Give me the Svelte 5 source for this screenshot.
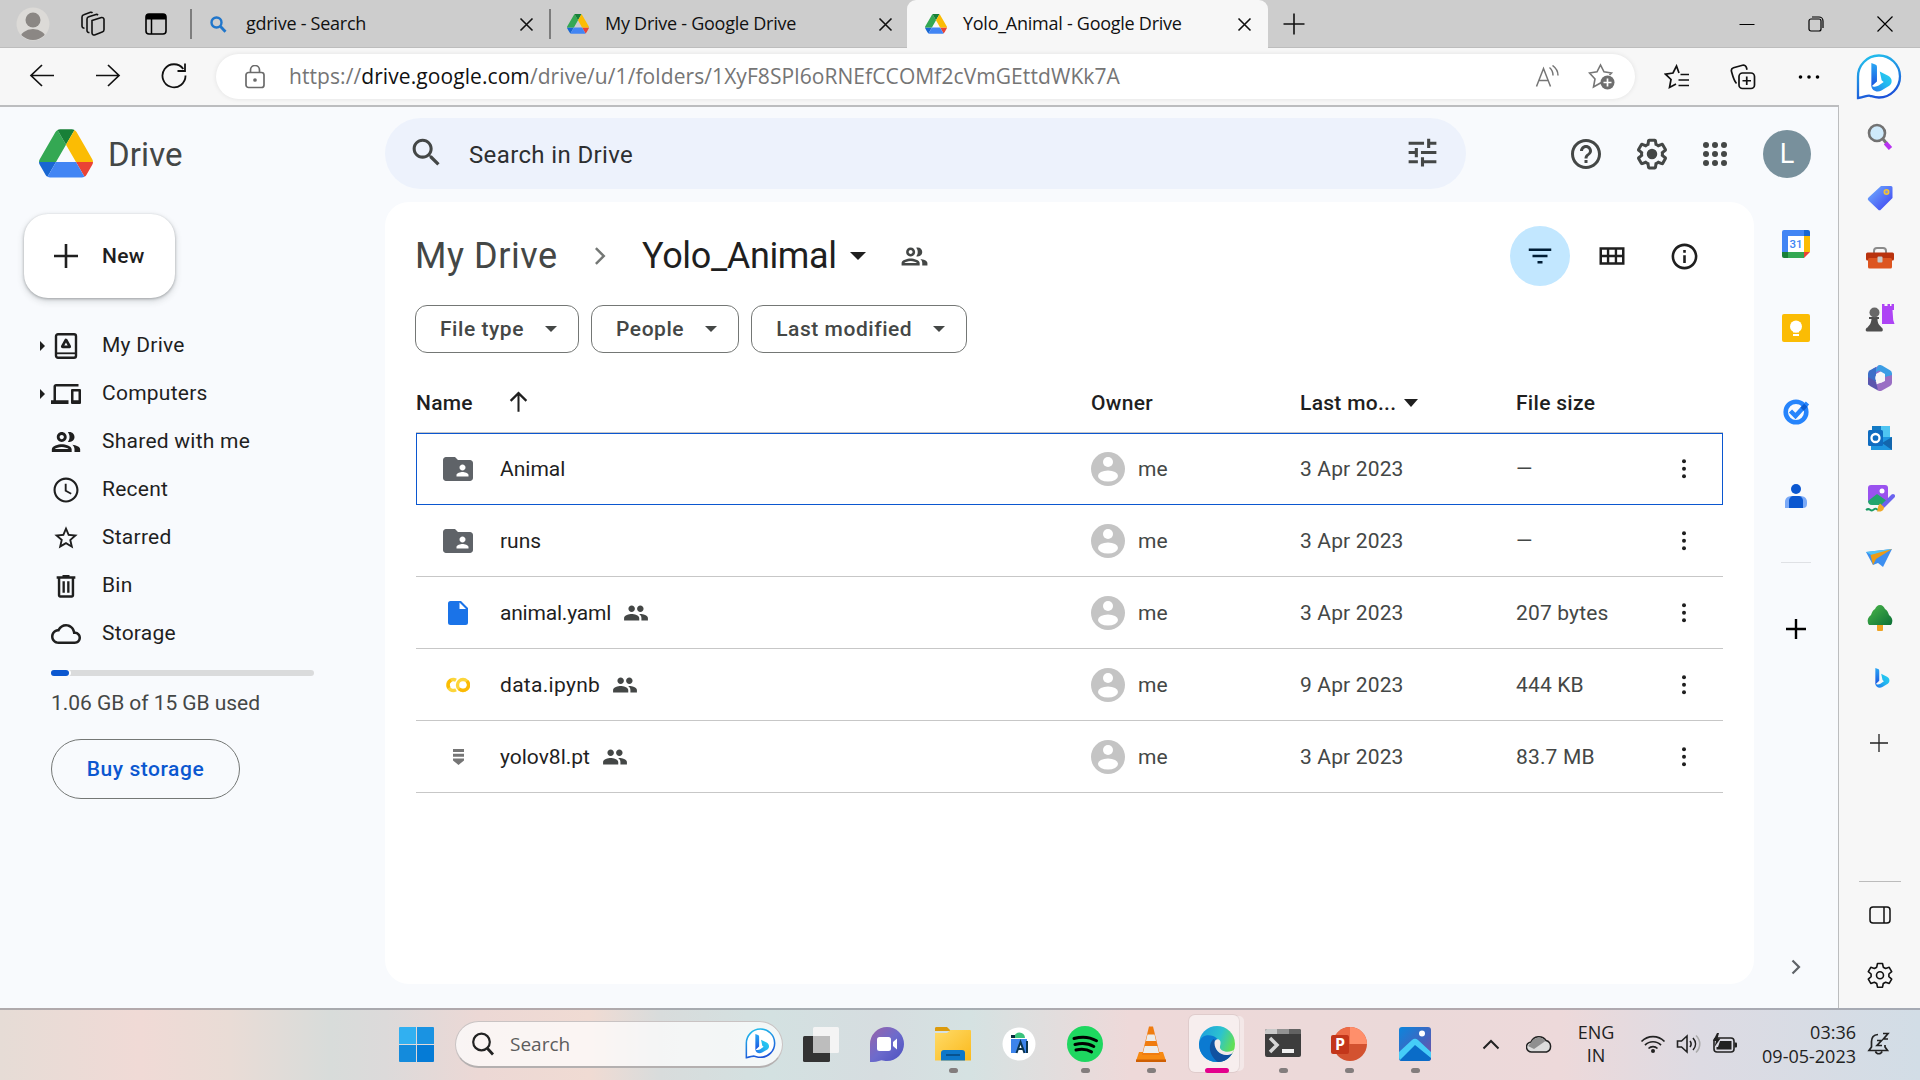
<script>
  const paths = {
    search: 'M15.5 14h-.79l-.28-.27C15.41 12.59 16 11.11 16 9.5 16 5.91 13.09 3 9.5 3S3 5.91 3 9.5 5.91 16 9.5 16c1.61 0 3.09-.59 4.23-1.57l.27.28v.79l5 4.99L20.49 19l-4.99-5zm-6 0C7.01 14 5 11.99 5 9.5S7.01 5 9.5 5 14 7.01 14 9.5 11.99 14 9.5 14z',
    tune: 'M3 17v2h6v-2H3zM3 5v2h10V5H3zm10 16v-2h8v-2h-8v-2h-2v6h2zM7 9v2H3v2h4v2h2V9H7zm14 4v-2H11v2h10zm-6-4h2V7h4V5h-4V3h-2v6z',
    help: 'M11 18h2v-2h-2v2zm1-16C6.48 2 2 6.48 2 12s4.48 10 10 10 10-4.48 10-10S17.52 2 12 2zm0 18c-4.41 0-8-3.59-8-8s3.59-8 8-8 8 3.59 8 8-3.59 8-8 8zm0-14c-2.21 0-4 1.79-4 4h2c0-1.1.9-2 2-2s2 .9 2 2c0 2-3 1.75-3 5h2c0-2.25 3-2.5 3-5 0-2.21-1.79-4-4-4z',
    gear: 'M13.85 22.25h-3.7c-.74 0-1.36-.54-1.45-1.27l-.27-1.89c-.27-.14-.53-.29-.79-.46l-1.8.72c-.7.26-1.47-.03-1.81-.65L2.2 15.53c-.35-.66-.2-1.44.36-1.88l1.53-1.19c-.01-.15-.02-.3-.02-.46 0-.15.01-.31.02-.46l-1.52-1.19c-.59-.45-.74-1.26-.37-1.88l1.85-3.19c.34-.62 1.11-.9 1.79-.63l1.81.73c.26-.17.52-.32.78-.46l.27-1.91c.09-.7.71-1.25 1.44-1.25h3.7c.74 0 1.36.54 1.45 1.27l.27 1.89c.27.14.53.29.79.46l1.8-.72c.71-.26 1.48.03 1.82.65l1.84 3.18c.36.66.2 1.44-.36 1.88l-1.52 1.19c.01.15.02.3.02.46s-.01.31-.02.46l1.52 1.19c.56.45.72 1.23.37 1.86l-1.86 3.22c-.34.62-1.11.9-1.8.63l-1.8-.72c-.26.17-.52.32-.78.46l-.27 1.91c-.1.68-.72 1.22-1.46 1.22zm-3.23-2h2.76l.37-2.55.53-.22c.44-.18.88-.44 1.34-.78l.45-.34 2.38.96 1.38-2.4-2.03-1.58.07-.56c.03-.26.06-.51.06-.78s-.03-.53-.06-.78l-.07-.56 2.03-1.58-1.39-2.4-2.39.96-.45-.35c-.42-.32-.87-.58-1.33-.77l-.52-.22-.37-2.55h-2.76l-.37 2.55-.53.21c-.44.19-.88.44-1.34.79l-.45.33-2.38-.95-1.39 2.39 2.03 1.58-.07.56a7 7 0 0 0-.06.79c0 .26.02.53.06.78l.07.56-2.03 1.58 1.38 2.4 2.39-.96.45.35c.43.33.86.58 1.33.77l.53.22.38 2.55zM12 8.5a3.5 3.5 0 1 0 0 7 3.5 3.5 0 0 0 0-7z',
    filter: 'M10 18h4v-2h-4v2zM3 6v2h18V6H3zm3 7h12v-2H6v2z',
    info: 'M11 7h2v2h-2zm0 4h2v6h-2zm1-9C6.48 2 2 6.48 2 12s4.48 10 10 10 10-4.48 10-10S17.52 2 12 2zm0 18c-4.41 0-8-3.59-8-8s3.59-8 8-8 8 3.59 8 8-3.59 8-8 8z',
    people: 'M9 13.5c-2.5 0-7 1.2-7 3.6V19h14v-1.9c0-2.4-4.5-3.6-7-3.6zM4.1 17c.6-.7 2.9-1.5 4.9-1.5s4.3.8 4.9 1.5H4.1zM9 12c1.93 0 3.5-1.57 3.5-3.5S10.93 5 9 5 5.5 6.57 5.5 8.5 7.07 12 9 12zm0-5c.83 0 1.5.67 1.5 1.5S9.83 10 9 10s-1.5-.67-1.5-1.5S8.17 7 9 7zm7.5 6.900c.9.8 1.500 1.900 1.500 3.200V19h4v-1.900c0-1.900-3-2.900-5.500-3.200zM14.500 12c1.930 0 3.500-1.570 3.500-3.500S16.430 5 14.500 5c-.5 0-.9.1-1.200.2.8.9 1.200 2 1.200 3.300s-.4 2.400-1.200 3.300c.3.1.7.2 1.200.2z',
    group: 'M16 11c1.66 0 2.99-1.34 2.99-3S17.66 5 16 5c-1.66 0-3 1.34-3 3s1.34 3 3 3zm-8 0c1.66 0 2.99-1.34 2.99-3S9.66 5 8 5C6.34 5 5 6.34 5 8s1.34 3 3 3zm0 2c-2.33 0-7 1.17-7 3.5V19h14v-2.5c0-2.33-4.67-3.5-7-3.5zm8 0c-.29 0-.62.02-.97.05 1.16.84 1.97 1.97 1.97 3.45V19h6v-2.5c0-2.33-4.67-3.5-7-3.5z',
    devices: 'M4 6h18V4H4c-1.1 0-2 .9-2 2v11H0v3h14v-3H4V6zm19 2h-6c-.55 0-1 .45-1 1v10c0 .55.45 1 1 1h6c.55 0 1-.45 1-1V9c0-.55-.45-1-1-1zm-1 9h-4v-7h4v7z',
    clock: 'M11.99 2C6.47 2 2 6.48 2 12s4.47 10 9.99 10C17.52 22 22 17.52 22 12S17.52 2 11.99 2zM12 20.3c-4.6 0-8.3-3.7-8.3-8.3s3.7-8.3 8.3-8.3 8.3 3.7 8.3 8.3-3.7 8.3-8.3 8.3zm.5-13.300H11v6l4.800 2.600.7-1.200-4-2.200z',
    star: 'M22 9.24l-7.19-.62L12 2 9.19 8.63 2 9.24l5.46 4.73L5.82 21 12 17.27 18.18 21l-1.63-7.03L22 9.24zM12 15.4l-3.76 2.27 1-4.28-3.32-2.88 4.38-.38L12 6.1l1.71 4.04 4.38.38-3.32 2.88 1 4.28L12 15.4z',
    cloud: 'M19.35 10.04C18.67 6.59 15.64 4 12 4 9.11 4 6.6 5.64 5.35 8.04 2.34 8.36 0 10.91 0 14c0 3.31 2.69 6 6 6h13c2.76 0 5-2.24 5-5 0-2.64-2.05-4.78-4.65-4.96zM19 18H6c-2.21 0-4-1.79-4-4 0-2.05 1.53-3.76 3.56-3.97l1.07-.11.5-.95C8.08 7.14 9.94 6 12 6c2.62 0 4.88 1.86 5.39 4.43l.3 1.5 1.53.11c1.56.1 2.78 1.41 2.78 2.96 0 1.65-1.35 3-3 3z',
    folder: 'M20 6h-8l-2-2H4c-1.1 0-1.99.9-1.99 2L2 18c0 1.1.9 2 2 2h16c1.1 0 2-.9 2-2V8c0-1.1-.9-2-2-2zm-5 3c1.1 0 2 .9 2 2s-.9 2-2 2-2-.9-2-2 .9-2 2-2zm4 8h-8v-1c0-1.33 2.67-2 4-2s4 .67 4 2v1z',
    grid: 'M2 5v14h20V5H2zm12.2 2v4H9.8V7h4.4zM4 7h3.900v4H4V7zm0 10v-4h3.900v4H4zm5.800 0v-4h4.400v4H9.800zM20 17h-3.900v-4H20v4zm-3.900-6V7H20v4h-3.900z',
    bin: 'M9 2.500v1.200H4v2.100h1V20c0 1.100.9 2 2 2h10c1.100 0 2-.9 2-2V5.800h1V3.700h-5V2.500H9zM7.100 5.800h9.800v14.100H7.100V5.800zM9 8v9.700h2V8H9zm4 0v9.700h2V8h-2z',
    up: 'M11.100 21V6.800L5.700 12.200 4.300 10.700 12 3l7.700 7.700-1.400 1.500-5.400-5.400V21z',
    chevron: 'M8.600 5 7.200 6.400 12.800 12l-5.600 5.600L8.600 19l7-7z',
  };

  const nav = [
    { label: 'My Drive', icon: 'mydrive', size: 30, tree: true },
    { label: 'Computers', icon: 'devices', size: 30, tree: true },
    { label: 'Shared with me', icon: 'people', size: 34 },
    { label: 'Recent', icon: 'clock', size: 30 },
    { label: 'Starred', icon: 'star', size: 28 },
    { label: 'Bin', icon: 'bin', size: 28 },
    { label: 'Storage', icon: 'cloud', size: 30 },
  ];
  const tabs = [
    { title: 'gdrive - Search', kind: 'search' },
    { title: 'My Drive - Google Drive', kind: 'drive' },
    { title: 'Yolo_Animal - Google Drive', kind: 'drive', active: true },
  ];
  const chips = ['File type', 'People', 'Last modified'];
  const files = [
    { name: 'Animal', kind: 'folder', date: '3 Apr 2023', size: '—', focus: true },
    { name: 'runs', kind: 'folder', date: '3 Apr 2023', size: '—' },
    { name: 'animal.yaml', kind: 'doc', date: '3 Apr 2023', size: '207 bytes', shared: true },
    { name: 'data.ipynb', kind: 'colab', date: '9 Apr 2023', size: '444 KB', shared: true },
    { name: 'yolov8l.pt', kind: 'binary', date: '3 Apr 2023', size: '83.7 MB', shared: true },
  ];
  const addons = ['calendar', 'keep', 'tasks', 'contacts'];
  const tools = ['lens', 'tag', 'toolbox', 'chess', 'm365', 'outlook', 'image', 'plane', 'tree', 'bing'];
  const apps = [
    { id: 'taskview' }, { id: 'chat' }, { id: 'explorer', open: true }, { id: 'studio' },
    { id: 'spotify', open: true }, { id: 'vlc', open: true }, { id: 'edge', open: true, active: true },
    { id: 'terminal', open: true }, { id: 'powerpoint', open: true }, { id: 'photos', open: true },
  ];
</script>

{#snippet icon(name, size)}
  <svg width={size} height={size} viewBox="0 0 24 24" fill="currentColor"><path d={paths[name]} /></svg>
{/snippet}

{#snippet logo(w)}
  <svg width={w} height={w * 0.9} viewBox="0 0 87.3 78">
    <path fill="#1967d2" d="m6.6 66.850 3.850 6.650c.8 1.400 1.950 2.500 3.300 3.300l13.750-23.800h-27.500c0 1.550.4 3.100 1.200 4.500z" />
    <path fill="#34a853" d="m43.650 25-13.750-23.800c-1.350.8-2.500 1.900-3.300 3.300l-25.400 44a9.060 9.060 0 0 0-1.200 4.500h27.500z" />
    <path fill="#ea4335" d="m73.550 76.800c1.350-.8 2.500-1.900 3.300-3.300l1.600-2.750 7.650-13.250c.8-1.400 1.200-2.950 1.200-4.500h-27.500z" />
    <path fill="#188038" d="m43.650 25 13.750-23.800c-1.350-.8-2.900-1.200-4.500-1.200h-18.500c-1.600 0-3.150.450-4.500 1.200z" />
    <path fill="#4285f4" d="m59.800 53h-32.300l-13.750 23.800c1.350.8 2.900 1.200 4.500 1.200h50.800c1.600 0 3.150-.450 4.500-1.200z" />
    <path fill="#fbbc04" d="m73.400 26.500-12.700-22c-.8-1.400-1.950-2.500-3.300-3.300l-13.750 23.800 16.150 28h27.450c0-1.550-.4-3.100-1.200-4.500z" />
  </svg>
{/snippet}

{#snippet bingMark()}
  <path fill="url(#bingA)" d="M3 0 6.500 1.300A2.200 2.200 0 0 1 8 3.400v13.100L3 21z" />
  <path fill="url(#bingB)" d="M10.500 7.500 18 11.300c4 2.200 4 6.800 1 9l-7 4.200c-4 2.200-9 0-9-4.500 2 1.800 4.500 1.300 6.500.1l4.500-3.200-1.800-1.500z" />
{/snippet}

{#snippet bingBubble(s)}
  <svg width={s} height={s} viewBox="0 0 46 46">
    <path d="M2 44V23a21 21 0 1 1 21 20.500c-4 0-7-1.200-9-1.700-3-.6-5 1.200-12 2.200z" fill="#fff" stroke="url(#bingC)" stroke-width="2.300" />
    <g transform="translate(12 9) scale(1.120)">{@render bingMark()}</g>
  </svg>
{/snippet}

{#snippet avatar()}
  <svg width="34" height="34" viewBox="0 0 34 34"><circle cx="17" cy="17" r="17" fill="#c4c4c4" /><circle cx="17" cy="10" r="5" fill="#fff" /><ellipse cx="17" cy="24" rx="10" ry="5.500" fill="#fff" /></svg>
{/snippet}

{#snippet fileIcon(kind)}
  {#if kind === 'folder'}
    {@render icon('folder', 36)}
  {:else if kind === 'doc'}
    <svg width="20" height="24" viewBox="0 0 20 24"><path d="M2.500 0H13l7 7v14.500a2.500 2.500 0 0 1-2.500 2.500h-15A2.500 2.500 0 0 1 0 21.500v-19A2.500 2.500 0 0 1 2.500 0z" fill="#1a73e8" /><path d="M11.500 1.500V8H18z" fill="#fff" /></svg>
  {:else if kind === 'colab'}
    <svg width="24" height="16" viewBox="0 0 24 16" fill="none" stroke-width="3.400"><path d="M10 3.200A5.500 5.500 0 1 0 10 12.800" stroke="#fcd53a" /><path d="M3 10.800A5.500 5.500 0 0 1 5 3.300" stroke="#fbbc04" /><circle cx="17" cy="8" r="5.500" stroke="#fcd53a" /><path d="M13.100 11.900A5.500 5.500 0 0 0 20.900 4.100" stroke="#fbb904" /></svg>
  {:else}
    <svg width="11" height="16" viewBox="0 0 11 16" fill="#757575"><path d="M0 0h11v3H0zM0 4.700h11v3H0zM0 9.400h11v2L5.500 16 0 11.400z" /></svg>
  {/if}
{/snippet}

{#snippet addon(id)}
  {#if id === 'calendar'}
    <svg width="28" height="28" viewBox="0 0 28 28"><path d="M2 0h21v6H6v16H0V2a2 2 0 0 1 2-2z" fill="#4285f4" /><path d="M22 0h4a2 2 0 0 1 2 2v4h-6z" fill="#1967d2" /><path d="M22 6h6v16h-6z" fill="#fbbc04" /><path d="M6 22h16v6H6z" fill="#34a853" /><path d="M0 22h6v6H2a2 2 0 0 1-2-2z" fill="#188038" /><path d="M22 22h6l-6 6z" fill="#ea4335" /><path d="M6 6h16v16H6z" fill="#fff" /><text x="14" y="18.200" text-anchor="middle" class="cal">31</text></svg>
  {:else if id === 'keep'}
    <svg width="28" height="28" viewBox="0 0 28 28"><rect width="28" height="28" rx="2" fill="#fbbc04" /><circle cx="14" cy="12.500" r="6" fill="#fff" /><path d="M11 16h6v2.500h-6zM11 20h6v2h-6z" fill="#fff" /></svg>
  {:else if id === 'tasks'}
    <svg width="28" height="28" viewBox="0 0 28 28"><circle cx="14" cy="14" r="10.300" fill="none" stroke="#2684fc" stroke-width="4.600" /><path d="M8.500 13l5 5L25.500 5" fill="none" stroke="#2684fc" stroke-width="4.500" /><path d="M18.500 9.500l3.600-3.800 3.400 3-3.800 4z" fill="#0b5bd0" /></svg>
  {:else}
    <svg width="24" height="28" viewBox="0 0 24 28"><path d="M1 26v-6c0-4 3-6 7-6h8c4 0 7 2 7 6v2c0 3-2 4-4 4z" fill="#7baaf7" /><path d="M5 26v-7c0-3 2-5 5-5h4c3 0 5 2 5 5v7z" fill="#0b57d0" /><circle cx="12" cy="7" r="5" fill="#0b57d0" /></svg>
  {/if}
{/snippet}

{#snippet tool(id)}
  <svg width="30" height="30" viewBox="0 0 30 30">
    {#if id === 'lens'}
      <path d="M18 16l4 5" stroke="#777" stroke-width="3" /><path d="M20.500 20l5 5.500" stroke="#b833f0" stroke-width="4.500" /><circle cx="12" cy="10" r="8" fill="#cfeafb" stroke="#727272" stroke-width="2.600" />
    {:else if id === 'tag'}
      <path d="M16 3h10a1.500 1.500 0 0 1 1.500 1.500V15L16 26.500a2 2 0 0 1-3 0L3.500 17.500a2 2 0 0 1 0-3z" fill="url(#tagG)" /><circle cx="21.500" cy="9" r="2.200" fill="#8a92d8" stroke="#f4c430" stroke-width="1.600" />
    {:else if id === 'toolbox'}
      <g transform="translate(0 2)"><path d="M9 8V6a3 3 0 0 1 3-3h6a3 3 0 0 1 3 3v2" fill="none" stroke="#8b8b8b" stroke-width="2" /><rect x="1" y="7.500" width="28" height="8" rx="1.500" fill="#b9330e" /><rect x="3" y="13" width="24" height="10.500" rx="1.500" fill="#dd5520" /><rect x="12.500" y="11.500" width="5" height="6" rx="1" fill="#c8c8c8" /></g>
    {:else if id === 'chess'}
      <path d="M17 1h2.500v2h3V1h2.500v2h1.500V1H29v6h-1.500l.7 10 1.300 4H17z" fill="#ae44f5" /><path d="M6 14h8v2h-1.500c0 5 2 6 4 8.500 1.500.5 2 4 0 4H2c-2-.2-1.500-3.500.5-4 2-2.500 3.500-3.500 4-8.500H4v-2z" fill="#4f4f4f" /><circle cx="9.500" cy="9.500" r="5" fill="#686868" />
    {:else if id === 'm365'}
      <path d="M15 2l-6 3.300a5 5 0 0 0-3 4.500v10.400l5-2.700V11l9-5z" fill="#8d6fd0" /><path d="M13 2.600a4 4 0 0 1 4 0l8 4.600A4 4 0 0 1 27 10.500v8L20 15v-4l-6-3.500-5 3z" fill="#3c9ee5" /><path d="M3 10.500a4 4 0 0 1 2-3.300L11 4v14l-8 4z" fill="#3c6fc8" /><path d="M27 12v8a4 4 0 0 1-2 3l-8 4.500a4 4 0 0 1-4 0l-3-5.500 10-4V14z" fill="#9a6fc4" /><path d="M3 14v6a4 4 0 0 0 2 3l8 4.500-2-9z" fill="#5b55ad" /><circle cx="15" cy="15" r="4.800" fill="#f7f7f7" />
    {:else if id === 'outlook'}
      <rect x="7" y="3" width="18" height="14" fill="#4fc5f2" /><path d="M7 3h9v7H7z" fill="#147ac4" /><path d="M6 14h21v13H6z" fill="#1e96e0" /><path d="M27 14v13L17 20z" fill="#1366ad" /><rect x="3" y="7" width="15" height="16" rx="1.500" fill="#0f6cc0" /><circle cx="10.500" cy="15" r="4" fill="none" stroke="#fff" stroke-width="2.300" />
    {:else if id === 'image'}
      <g transform="translate(0 1)"><rect x="3" y="1" width="20" height="18" rx="3" fill="#9a52ef" /><circle cx="17" cy="7" r="2.500" fill="#fff" /><path d="M3 17l9-7 10 7-4 4H7c-3 0-4-2-4-4z" fill="#22a56d" /><path d="M1 26c4-3 4 2 7 0s2-2 5 0" fill="none" stroke="#1a9a63" stroke-width="2" /><path d="M28 12L18 22" stroke="#6b63ef" stroke-width="4" stroke-linecap="round" /><path d="M15 19.500l4 3.500c0 4-3 5-7 4.500 1-2 .5-6 3-8z" fill="#f0aa28" /></g>
    {:else if id === 'plane'}
      <path d="M1 9l26-3-9 18-5-4-5 2z" fill="#3d8ff0" /><path d="M1 9l26-3L10 14z" fill="#53c4f5" /><path d="M27 6L5.500 12 8 22 11 16z" fill="#eb9c17" />
    {:else if id === 'tree'}
      <rect x="12" y="20" width="6" height="8" rx="1" fill="#efa424" /><path d="M15 2c2.500 0 4 2 5 4 2 1 3 3 4 6 3 2 4 5 3 8-.4 1.500-1 2-2 2H5c-1 0-1.600-.5-2-2-1-3 0-6 3-8 1-3 2-5 4-6 1-2 2.500-4 5-4z" fill="url(#treeG)" />
    {:else}
      <g transform="translate(8 5) scale(.78)">{@render bingMark()}</g>
    {/if}
  </svg>
{/snippet}

{#snippet app(id)}
  <svg width="38" height="38" viewBox="0 0 38 38">
    {#if id === 'taskview'}
      <rect x="1" y="11" width="27" height="26" rx="1.500" fill="#333" /><rect x="11" y="2" width="26" height="26" rx="1.500" fill="#f4f4f4" /><path d="M11 11h17v17H11z" fill="#bdbdbd" />
    {:else if id === 'chat'}
      <path d="M2 37V19A17 17 0 1 1 19 36c-2 0-4-.3-5.500-.8C10 36.500 6 37 2 37z" fill="url(#chatG)" /><rect x="9" y="12" width="14" height="14" rx="2.500" fill="#fff" /><path d="M25 17l4-3.500v11L25 21z" fill="#fff" />
    {:else if id === 'explorer'}
      <path d="M1 4a1.500 1.500 0 0 1 1.500-2H13l4 4H1z" fill="#dc9b0d" /><path d="M1 8h12l3.500-3H36a1 1 0 0 1 1 1v29.500H1z" fill="url(#foldG)" /><path d="M7 35.500V28a3 3 0 0 1 3-3h18a3 3 0 0 1 3 3v7.500z" fill="#0d77c9" /><path d="M12 30h14" stroke="#07528f" stroke-width="2" />
    {:else if id === 'studio'}
      <circle cx="19" cy="19" r="16.500" fill="#fff" /><path d="M11 14h16v14h-3l-4-11-4 11h-5z" fill="#3d84ec" /><path d="M14 13a5.500 5.500 0 0 1 11 0z" fill="#3bc37d" /><path d="M11 10h4v3h-4z" fill="#082d40" /><path d="M16.500 28l4-11 4 11M18.500 24h4M27 16v12" fill="none" stroke="#0b3550" stroke-width="2" />
    {:else if id === 'spotify'}
      <circle cx="19" cy="19" r="18" fill="#1ed760" /><path d="M8 13.500c8-2.300 16-1.500 22.500 2.300M9 19.500c7-1.900 13.500-1.200 18.800 2M10 25c6-1.400 11-.8 15.500 1.900" fill="none" stroke="#000" stroke-width="3" stroke-linecap="round" />
    {:else if id === 'vlc'}
      <path d="M7 27h24l3 9H4z" fill="#f78a12" /><path d="M17 1.500h4L28 30H10z" fill="#f07c10" /><path d="M15.500 9.500h7l1.500 6.500H14zM12.700 21h12.600l1.700 7H11z" fill="#ececec" /><path d="M4 34.500h30V37H4z" fill="#cf5f04" />
    {:else if id === 'edge'}
      <circle cx="19" cy="19" r="18" fill="url(#edgeA)" /><path d="M1 19C2 10 10 9 15 11c5 2 6 5 4.500 7-3 4-1 13 6 13 4 0 8-2 9-3-5 8-11 9-15.500 9C8 37 1 29 1 19z" fill="#0b7ad1" /><path d="M16 14c-6 4-6 16 4 23 7 0 12-4 14.500-9.500-8 5-18 0-16.500-8z" fill="#1151a0" /><path d="M16.500 18c0-5 7-5 6 1-.7 3-1 4 1 6 4 3 11 2 13-1-1 2-1.500 3-2.500 4.500C26 33 16.500 27 16.500 18z" fill="#f5e9ea" />
    {:else if id === 'terminal'}
      <rect x="1" y="4" width="36" height="28" rx="2" fill="#3d3d3d" /><path d="M1 6a2 2 0 0 1 2-2h10v5H1z" fill="#c9c9c9" /><path d="M13 4h12v5H13z" fill="#929292" /><path d="M25 4h10a2 2 0 0 1 2 2v3H25z" fill="#626262" /><path d="M6 13l7 7-7 7" fill="none" stroke="#d6d6d6" stroke-width="3.500" /><rect x="18" y="24" width="12" height="4" fill="#f0f0f0" />
    {:else if id === 'powerpoint'}
      <circle cx="20" cy="19" r="17" fill="#d35230" /><path d="M20 2a17 17 0 0 1 17 17H20z" fill="#ff8f6b" /><path d="M20 2v17H3A17 17 0 0 1 20 2z" fill="#ed6c47" /><rect x="1" y="10" width="18" height="19" rx="2" fill="#c3361a" /><text x="10" y="25" text-anchor="middle" class="ppt">P</text>
    {:else}
      <rect x="3" y="2" width="32" height="34" rx="3" fill="url(#photoG)" /><path d="M4 34l15-16 16 15c0 2-1 3-3 3H6c-2 0-3-1-2-2z" fill="#0a6cc8" /><path d="M3 27l13-12c2-1.800 4-1.800 6 0l13 12v6L19 20 4 35c-1-1-1-2-1-3z" fill="#45cdf8" /><circle cx="26" cy="8.500" r="3" fill="#fff" />
    {/if}
  </svg>
{/snippet}

<svg class="defs" width="0" height="0">
  <defs>
    <linearGradient id="bingA" x1="0" y1="0" x2="0" y2="1"><stop offset="0" stop-color="#2aa8f4" /><stop offset="1" stop-color="#1a53e0" /></linearGradient>
    <linearGradient id="bingB" x1="1" y1="0" x2="0" y2="1"><stop offset="0" stop-color="#28d5f0" /><stop offset=".5" stop-color="#22b5f0" /><stop offset="1" stop-color="#2472ea" /></linearGradient>
    <linearGradient id="bingC" x1="0.300" y1="0" x2=".6" y2="1"><stop offset="0" stop-color="#22bdec" /><stop offset="1" stop-color="#1b4fd8" /></linearGradient>
    <linearGradient id="tagG" x1="0" y1="0" x2="1" y2="1"><stop offset="0" stop-color="#72b4ff" /><stop offset="1" stop-color="#3d3df0" /></linearGradient>
    <linearGradient id="treeG" x1="0" y1="0" x2="1" y2="1"><stop offset="0" stop-color="#4cb84a" /><stop offset="1" stop-color="#0c7036" /></linearGradient>
    <linearGradient id="chatG" x1="0" y1="0" x2="1" y2="1"><stop offset="0" stop-color="#9a63a8" /><stop offset=".5" stop-color="#6d6bcc" /><stop offset="1" stop-color="#4b50c0" /></linearGradient>
    <linearGradient id="foldG" x1="0" y1="0" x2="1" y2="1"><stop offset="0" stop-color="#ffdb68" /><stop offset="1" stop-color="#fbb91c" /></linearGradient>
    <linearGradient id="edgeA" x1="0" y1="0" x2="1" y2=".4"><stop offset="0" stop-color="#1c9be0" /><stop offset=".6" stop-color="#2cc3cf" /><stop offset="1" stop-color="#62df55" /></linearGradient>
    <linearGradient id="photoG" x1="0" y1="0" x2="1" y2="1"><stop offset="0" stop-color="#0b86dd" /><stop offset=".6" stop-color="#4563bd" /><stop offset="1" stop-color="#7c4fa3" /></linearGradient>
  </defs>
</svg>

<div class="screen">
  <header class="tabbar">
    <svg class="profile" width="34" height="34" viewBox="0 0 34 34"><clipPath id="pc"><circle cx="17" cy="17" r="16" /></clipPath><circle cx="17" cy="17" r="16.500" fill="#dcdad7" /><g clip-path="url(#pc)" fill="#8b8784"><circle cx="17" cy="13" r="7.500" /><ellipse cx="17" cy="32" rx="13" ry="10" /></g></svg>
    <svg class="spaces" width="26" height="26" viewBox="0 0 26 26" fill="none" stroke="#111" stroke-width="1.600"><path d="M12 9.500l9.500-3a2 2 0 0 1 2.500 1.800v10.500a2.500 2.500 0 0 1-1.800 2.300l-7.600 2.800a2 2 0 0 1-2.600-1.900z" /><path d="M9.500 21.500a2 2 0 0 1-2.500-2V8a2.500 2.500 0 0 1 1.800-2.300L16 3.500a2 2 0 0 1 2 .6M4.500 17A2 2 0 0 1 2 15V6a2.500 2.500 0 0 1 1.800-2.300L10.500 1.300a2 2 0 0 1 2 .6" /></svg>
    <svg class="actions" width="22" height="22" viewBox="0 0 22 22"><rect x="1" y="1" width="20" height="20" rx="3" fill="none" stroke="#000" stroke-width="1.600" /><path d="M1 4a3 3 0 0 1 3-3h14a3 3 0 0 1 3 3v2.500H1z" /><path d="M6.500 6v15" stroke="#000" stroke-width="1.500" /></svg>
    {#each tabs as t}
      <div class="tab" class:active={t.active}>
        <span class="favicon">
          {#if t.kind === 'drive'}
            {@render logo(22)}
          {:else}
            <svg width="17" height="17" viewBox="0 0 17 17" fill="none" stroke="#2076cb"><circle cx="6.500" cy="6.500" r="5" stroke-width="2.400" /><path d="M10.500 10.500l5 5.200" stroke-width="2.800" /></svg>
          {/if}
        </span>
        <span class="title">{t.title}</span>
        <svg class="close" width="15" height="15" viewBox="0 0 15 15" stroke="#111" stroke-width="1.600"><path d="M1.500 1.500l12 12M13.500 1.500l-12 12" /></svg>
      </div>
    {/each}
    <svg class="newtab" width="22" height="22" viewBox="0 0 22 22" stroke="#111" stroke-width="1.600"><path d="M11 .5v21M.5 11h21" /></svg>
    <div class="controls">
      <svg width="16" height="16" viewBox="0 0 16 16" stroke="#000"><path d="M.5 8.500h15" /></svg>
      <svg width="16" height="16" viewBox="0 0 16 16" stroke="#000" fill="none" stroke-width="1.200"><rect x="1" y="3" width="12" height="12" rx="2" /><path d="M4 1h7a4 4 0 0 1 4 4v7" /></svg>
      <svg width="16" height="16" viewBox="0 0 16 16" stroke="#000" stroke-width="1.200"><path d="M.5.5l15 15M15.500.5l-15 15" /></svg>
    </div>
  </header>

  <div class="toolbar">
    <div class="navbtns">
      <svg width="26" height="26" viewBox="0 0 26 26" fill="none" stroke="#111" stroke-width="1.700"><path d="M25 12.500H2M13 2L2 12.500 13 23" /></svg>
      <svg width="26" height="26" viewBox="0 0 26 26" fill="none" stroke="#111" stroke-width="1.700"><path d="M1 12.500h23M13 2l11 10.500L13 23" /></svg>
      <svg width="26" height="26" viewBox="0 0 26 26" fill="none" stroke="#111" stroke-width="1.800"><path d="M24.500 12.500A11.500 11.500 0 1 1 22.300 6M24 .5v7.500h-7.500" /></svg>
    </div>
    <div class="url">
      <svg class="lock" width="20" height="24" viewBox="0 0 20 24" fill="none" stroke="#6b6b6b" stroke-width="1.700"><rect x="1" y="7.500" width="18" height="15" rx="2.500" /><path d="M5.500 7.500V5a4.500 4.500 0 0 1 9 0v2.500" /><circle cx="10" cy="15" r="1" fill="#555" /></svg>
      <span class="address">https://<b>drive.google.com</b>/drive/u/1/folders/1XyF8SPl6oRNEfCCOMf2cVmGEttdWKk7A</span>
      <svg class="read" width="26" height="24" viewBox="0 0 26 24" fill="none" stroke="#767676" stroke-width="1.500"><path d="M1.500 21.500L8.500 3.500l7 18M4 15.500h9M14.500 2.500c2.500 2 3.500 4.500 3.500 8M17.500.5c3.500 2.500 5.500 6 5.500 10" /></svg>
      <svg width="27" height="27" viewBox="0 0 27 27"><path d="M15 21.500L12.500 20 5.500 24l1.500-8L1.500 10l7.500-1.200L12.500 2l3.500 6.800 7.500 1.200-2 2" fill="none" stroke="#767676" stroke-width="1.600" /><circle cx="19.500" cy="19.500" r="7" fill="#6e6e6e" /><path d="M19.500 15.500v8M15.500 19.500h8" stroke="#fff" stroke-width="1.700" /></svg>
    </div>
    <div class="menus">
      <svg width="26" height="26" viewBox="0 0 26 26" fill="none" stroke="#111" stroke-width="1.700"><path d="M15 9L12.500 2 9 9 1.500 10.200 7 15.500 5.500 23.500 12 20M16.500 10.500H25M14.500 16H25M14.500 21.500H25" /></svg>
      <svg width="26" height="26" viewBox="0 0 26 26" fill="none" stroke="#111" stroke-width="1.700"><rect x="9" y="9" width="15.500" height="15.500" rx="3.500" /><path d="M16.750 12.500v8.500M12.500 16.750h8.500M6.500 19.500C4 17 3 13 1.500 7.500 1 5.500 2 4.300 3.500 3.800l9-2.500c2-.6 3.500.7 4 2.500l.5 2" /></svg>
      <svg width="26" height="26" viewBox="0 0 26 26"><circle cx="4.500" cy="13" r="1.800" /><circle cx="13" cy="13" r="1.800" /><circle cx="21.500" cy="13" r="1.800" /></svg>
    </div>
    <div class="copilot">{@render bingBubble(46)}</div>
  </div>

  <div class="body">
    <div class="page">
      <aside class="side">
        <div class="brand">{@render logo(54)}<span>Drive</span></div>
        <button class="new"><svg width="24" height="24" viewBox="0 0 24 24" stroke="#1f1f1f" stroke-width="2.600"><path d="M12 0v24M0 12h24" /></svg>New</button>
        <nav>
          {#each nav as n}
            <div class="navrow">
              <span class="caret" class:show={n.tree}></span>
              <span class="navicon">
                {#if n.icon === 'mydrive'}
                  <svg width="24" height="26" viewBox="0 0 24 26"><rect x="2" y="1.200" width="20" height="23.500" rx="2" fill="none" stroke="#1f1f1f" stroke-width="2.400" /><path d="M2 20.300h20" stroke="#1f1f1f" stroke-width="1.800" /><path d="M12 7.500l3.300 6H8.700z" fill="#f8fafd" stroke="#1f1f1f" stroke-width="3.600" stroke-linejoin="round" /><path d="M12 9.500l1.700 3h-3.400z" fill="#f8fafd" /></svg>
                {:else}
                  {@render icon(n.icon, n.size)}
                {/if}
              </span>
              <span class="navlabel">{n.label}</span>
            </div>
          {/each}
        </nav>
        <div class="quota"><i></i></div>
        <div class="used">1.06 GB of 15 GB used</div>
        <button class="buy">Buy storage</button>
      </aside>

      <div class="center">
        <div class="top">
          <div class="searchbox">
            {@render icon('search', 37)}
            <span>Search in Drive</span>
            {@render icon('tune', 37)}
          </div>
          <div class="tophelp">{@render icon('help', 36)}</div>
          <div class="topgear">{@render icon('gear', 36)}</div>
          <div class="topapps"><svg width="24" height="24" viewBox="0 0 24 24" fill="#444746">{#each [3, 12, 21] as y}{#each [3, 12, 21] as x}<circle cx={x} cy={y} r="3" />{/each}{/each}</svg></div>
          <div class="account">L</div>
        </div>

        <div class="lower">
          <main class="panel">
            <div class="crumbs">
              <span class="root">My Drive</span>
              <span class="sep">{@render icon('chevron', 30)}</span>
              <span class="here">Yolo_Animal</span>
              <span class="drop"></span>
              <span class="share">{@render icon('people', 31)}</span>
              <div class="viewbtns">
                <span class="on">{@render icon('filter', 30)}</span>
                <span>{@render icon('grid', 30)}</span>
                <span>{@render icon('info', 31)}</span>
              </div>
            </div>
            <div class="chips">
              {#each chips as c}
                <button class="chip">{c}<span class="tri"></span></button>
              {/each}
            </div>
            <div class="row head">
              <div class="name">Name<span class="sort">{@render icon('up', 27)}</span></div>
              <div>Owner</div>
              <div class="mod">Last mo...<span class="tri big"></span></div>
              <div>File size</div>
            </div>
            {#each files as f}
              <div class="row file" class:focus={f.focus}>
                <div class="name">
                  <span class="ficon">{@render fileIcon(f.kind)}</span>
                  <span class={f.kind}>{f.name}</span>
                  {#if f.shared}<span class="grp">{@render icon('group', 26)}</span>{/if}
                </div>
                <div class="owner">{@render avatar()}<span>me</span></div>
                <div>{f.date}</div>
                <div>{f.size}</div>
                <svg class="dots" width="6" height="20" viewBox="0 0 6 20" fill="#1f1f1f"><circle cx="3" cy="2.300" r="2" /><circle cx="3" cy="9.800" r="2" /><circle cx="3" cy="17.300" r="2" /></svg>
              </div>
            {/each}
          </main>
          <aside class="addons">
            {#each addons as a}<div class="slot">{@render addon(a)}</div>{/each}
            <hr />
            <svg class="plus" width="20" height="20" viewBox="0 0 20 20" stroke="#000" stroke-width="2.400"><path d="M10 0v20M0 10h20" /></svg>
            <svg class="collapse" width="10" height="16" viewBox="0 0 10 16" fill="none" stroke="#5f6368" stroke-width="2.200"><path d="M1.500 1.500L8 8l-6.500 6.500" /></svg>
          </aside>
        </div>
      </div>
    </div>

    <aside class="edgebar">
      {#each tools as t}<div class="etool">{@render tool(t)}</div>{/each}
      <div class="etool add"><svg width="18" height="18" viewBox="0 0 18 18" stroke="#222" stroke-width="1.300"><path d="M9 0v18M0 9h18" /></svg></div>
      <div class="ebottom">
        <div class="etool"><svg width="22" height="18" viewBox="0 0 22 18" fill="none" stroke="#111" stroke-width="1.500"><rect x="1" y="1" width="20" height="16" rx="3" /><path d="M15 1v16" /></svg></div>
        <div class="etool"><svg width="28" height="28" viewBox="0 0 28 28" fill="none" stroke="#111" stroke-width="1.600" stroke-linejoin="round"><path d="M11.500 2.500h5l.8 3.700 2.300 1.300 3.600-1.200 2.500 4.300-2.800 2.400v2.700l2.800 2.400-2.500 4.300-3.600-1.200-2.300 1.300-.8 3.700h-5l-.8-3.700-2.300-1.300-3.600 1.200-2.500-4.300 2.800-2.400V13L2.300 10.600l2.500-4.300 3.600 1.200 2.300-1.300z" /><circle cx="14" cy="14.300" r="3.500" /></svg></div>
      </div>
    </aside>
  </div>

  <footer class="taskbar">
    <div class="start"><svg width="35" height="35" viewBox="0 0 35 35"><path fill="#31b0f1" d="M0 1a1 1 0 0 1 1-1h16v17H0z" /><path fill="#1a93e2" d="M18 0h16a1 1 0 0 1 1 1v16H18z" /><path fill="#148bdc" d="M0 18h17v17H1a1 1 0 0 1-1-1z" /><path fill="#057bd6" d="M18 18h17v16a1 1 0 0 1-1 1H18z" /></svg></div>
    <div class="wsearch">
      <svg width="24" height="24" viewBox="0 0 24 24" fill="none" stroke="#222"><circle cx="10.500" cy="10" r="8.300" stroke-width="2.200" /><path d="M16.500 16.500l5.500 6" stroke-width="2.800" /></svg>
      <span>Search</span>
      {@render bingBubble(31)}
    </div>
    {#each apps as a}
      <div class="app" class:active={a.active}>
        {@render app(a.id)}
        {#if a.open}<i class="mark"></i>{/if}
      </div>
    {/each}
    <div class="tray">
      <svg class="t-up" width="18" height="11" viewBox="0 0 18 11" fill="none" stroke="#222" stroke-width="2"><path d="M1.500 9.500L9 2l7.500 7.500" /></svg>
      <svg class="t-cloud" width="26" height="18" viewBox="0 0 26 18"><path d="M6 17a5 5 0 0 1-1-10 8.500 8.500 0 0 1 15-1.500A6 6 0 0 1 20.500 17z" fill="#dcdcdc" stroke="#222" stroke-width="1.500" /><path d="M5 7.500a8.500 8.500 0 0 1 14.500-1.500L8 14 2 11z" fill="#8f8f8f" /></svg>
      <div class="lang"><span>ENG</span><span>IN</span></div>
      <svg class="t-wifi" width="26" height="20" viewBox="0 0 26 20" fill="none" stroke="#222" stroke-width="1.700"><path d="M1.500 7.500a16 16 0 0 1 23 0M5 11.200a11 11 0 0 1 16 0M8.500 14.500a6.500 6.500 0 0 1 9 0" /><circle cx="13" cy="17" r="2" fill="#222" stroke="none" /></svg>
      <svg class="t-vol" width="26" height="20" viewBox="0 0 26 20" fill="none" stroke="#222" stroke-width="1.600"><path d="M1.500 7h4l5.500-5v16l-5.500-5h-4zM14 7c1.500 2 1.500 4 0 6M17 4c3.300 3.600 3.300 8.400 0 12" /><path d="M20 1.500c5 5 5 12 0 17" stroke="#aaa" /></svg>
      <svg class="t-bat" width="26" height="20" viewBox="0 0 26 20"><rect x="2" y="4" width="20" height="14" rx="3" fill="none" stroke="#222" stroke-width="1.600" /><path d="M8 7h11.500v8.500H4.500V13H6z" fill="#222" /><path d="M22.500 8.500H24a1 1 0 0 1 1 1v3a1 1 0 0 1-1 1h-1.500z" fill="#222" /><path d="M5-1L1 7h3l-1.500 6L8.500 4.500H5.500L7-1z" fill="#222" /></svg>
      <div class="clockbox"><span>03:36</span><span>09-05-2023</span></div>
      <svg class="t-bell" width="24" height="24" viewBox="0 0 24 24" fill="none" stroke="#222" stroke-width="1.700"><path d="M11 2.500C6.500 3 4.500 6 4.500 9.500V15L2 18.500h18.500L18 15v-2M8.500 19.500c1 3 5.500 3 6.500 0M10 8.500h4.500L10 13.500h5M16 1.500h5l-4.500 5.500H21" /></svg>
    </div>
  </footer>
</div>

<style>
  :global(body) { margin: 0; overflow: hidden; }
  * { box-sizing: border-box; }
  svg { display: block; flex: none; }
  .defs { position: absolute; }
  button { font: inherit; color: inherit; padding: 0; }
  .screen { width: 1920px; height: 1080px; display: flex; flex-direction: column; font-family: Roboto, 'Liberation Sans', sans-serif; font-size: 21px; color: #1f1f1f; white-space: nowrap; overflow: hidden; }

  .tabbar { height: 48px; flex: none; display: flex; align-items: center; background: #cdcdcd; font-family: 'Open Sans', 'Noto Sans', sans-serif; font-size: 18px; color: #111; box-shadow: inset 0 -1px #bdbdbd; }
  .profile { margin-left: 16px; }
  .spaces { margin-left: 30px; }
  .actions { margin: 0 23px 0 39px; }
  .tab { width: 359px; height: 30px; border-left: 2px solid #7d7d7d; display: flex; align-items: center; padding-left: 16px; }
  .tab.active { width: 361px; height: 48px; border: 0; background: #f7f7f7; border-radius: 9px 9px 0 0; padding-left: 18px; margin-left: -1px; }
  .favicon { width: 38px; display: flex; }
  .tab:first-of-type .favicon { padding-left: 2px; }
  .title { flex: 1; letter-spacing: -0.260px; padding-bottom: 2px; }
  .close { margin-right: 15px; }
  .tab.active .close { margin-right: 16px; }
  .newtab { margin-left: 15px; }
  .controls { margin-left: auto; display: flex; gap: 53px; padding-right: 27px; }

  .toolbar { height: 57px; flex: none; display: flex; align-items: center; background: #f7f7f7; font-family: 'Open Sans', 'Noto Sans', sans-serif; }
  .navbtns { display: flex; gap: 40px; width: 216px; padding: 0 0 1px 29px; }
  .url { width: 1419px; height: 45px; border-radius: 23px; background: #fff; box-shadow: 0 0 5px rgba(0, 0, 0, 0.09); display: flex; align-items: center; padding: 0 20px 0 29px; font-size: 21px; color: #757575; }
  .address { margin-left: 24px; padding-bottom: 1px; flex: 1; letter-spacing: 0.080px; }
  .address b { font-weight: 400; color: #111; }
  .read { margin-right: 27px; }
  .menus { display: flex; gap: 40px; margin-left: 29px; }
  .copilot { margin-left: 34px; }

  .body { height: 903px; flex: none; display: flex; background: #f7f7f7; }
  .page { width: 1839px; border-top: 2px solid #bcbdbf; border-right: 1px solid #bcbdbf; background: #f8fafd; display: flex; }
  .side { width: 385px; flex: none; }
  .brand { height: 107px; padding: 0 0 14px 39px; display: flex; align-items: center; gap: 15px; font-size: 33px; color: #444746; letter-spacing: 0.100px; }
  .brand span { padding-top: 1px; }
  .new { width: 151px; height: 84px; margin-left: 24px; border: 0; border-radius: 24px; background: #fff; box-shadow: 0 1px 3px rgba(60, 64, 67, 0.4), 0 3px 6px 1px rgba(60, 64, 67, 0.15); display: flex; align-items: center; gap: 24px; padding-left: 30px; font-weight: 500; letter-spacing: 0.300px; }
  nav { padding-top: 24px; }
  .navrow { height: 48px; display: flex; align-items: center; }
  .navlabel { padding-bottom: 2px; letter-spacing: 0.250px; }
  .caret { width: 5px; height: 0; margin-left: 40px; border-left: 5px solid transparent; border-top: 5px solid transparent; border-bottom: 5px solid transparent; }
  .caret.show { border-left-color: #1f1f1f; }
  .navicon { width: 42px; margin-right: 15px; display: flex; justify-content: center; }
  .quota { width: 263px; height: 6px; margin: 12px 0 0 51px; border-radius: 3px; background: #dadbdc; }
  .quota i { display: block; width: 18px; height: 6px; border-radius: 3px; background: #0b57d0; box-shadow: 2px 0 #fff; }
  .used { margin: 14px 0 0 51px; line-height: 26px; color: #444746; letter-spacing: -0.050px; }
  .buy { width: 189px; height: 60px; margin: 23px 0 0 51px; border: 1px solid #747775; border-radius: 30px; background: none; color: #0b57d0; font-weight: 500; letter-spacing: 0.550px; }

  .center { flex: 1; display: flex; flex-direction: column; }
  .top { height: 95px; padding-top: 11px; display: flex; color: #444746; }
  .top > div { height: 72px; display: flex; align-items: center; justify-content: center; }
  .top > .searchbox { width: 1081px; height: 71px; border-radius: 36px; background: #edf2fc; padding: 0 25px 0 23px; font-size: 24px; justify-content: flex-start; }
  .searchbox span { flex: 1; padding: 2px 0 0 24px; color: #2d2f31; letter-spacing: 0.370px; }
  .searchbox :global(svg) { margin-bottom: 2px; }
  .tophelp { width: 66px; margin-left: 87px; }
  .topgear { width: 66px; }
  .topapps { width: 60px; }
  .top > .account { width: 48px; height: 48px; margin: 12px 0 0 18px; border-radius: 50%; background: #78909c; color: #fff; font-size: 27px; }
  .lower { flex: 1; display: flex; }
  .panel { width: 1369px; height: 782px; border-radius: 24px; background: #fff; padding: 0 31px; }
  .crumbs { height: 103px; padding-top: 5px; display: flex; align-items: center; font-size: 36px; }
  .root { width: 142px; margin-left: -1px; color: #444746; letter-spacing: 0.550px; }
  .sep { margin: 0 26px 0 29px; color: #747775; }
  .here { width: 195px; letter-spacing: -0.350px; }
  .drop { margin-left: 13px; border: 8px solid transparent; border-top-color: #1f1f1f; border-bottom: 0; }
  .share { margin-left: 33px; color: #444746; }
  .viewbtns { margin-left: auto; display: flex; gap: 12px; padding-right: 9px; }
  .viewbtns span { width: 60px; height: 60px; border-radius: 50%; display: flex; align-items: center; justify-content: center; }
  .viewbtns .on { background: #c2e7ff; color: #001d35; }
  .chips { display: flex; gap: 12px; margin-left: -1px; }
  .chip { height: 48px; border: 1px solid #747775; border-radius: 12px; background: #fff; padding: 0 21px 0 24px; display: flex; align-items: center; gap: 21px; color: #444746; font-weight: 500; letter-spacing: 0.550px; }
  .tri { border: 6px solid transparent; border-top-color: currentColor; border-bottom: 0; }
  .tri.big { border-width: 8px 7px 0; }
  .row { display: grid; grid-template-columns: 675px 209px 216px 148px auto; align-items: center; height: 72px; color: #444746; border-bottom: 1px solid #c7c7c7; letter-spacing: 0.150px; }
  .head { height: 80px; padding-top: 20px; font-weight: 500; color: #1f1f1f; letter-spacing: 0.300px; }
  .name { display: flex; align-items: center; color: #1f1f1f; letter-spacing: 0; }
  .head .name { letter-spacing: 0.250px; }
  .sort { margin: 0 0 2px 32px; }
  .mod { display: flex; align-items: center; gap: 8px; }
  .file.focus { border-bottom-color: #0b57d0; box-shadow: inset 1px 0 #0b57d0, inset -1px 0 #0b57d0, inset 0 1px #0b57d0; }
  .ficon { width: 84px; display: flex; justify-content: center; color: #5f6368; }
  .doc { letter-spacing: -0.200px; }
  .colab { letter-spacing: 0.300px; }
  .grp { margin-left: 12px; color: #444746; }
  .owner { display: flex; align-items: center; gap: 13px; }
  .dots { margin-left: 17px; }
  .addons { width: 84px; display: flex; flex-direction: column; align-items: center; }
  .slot { height: 84px; display: flex; align-items: center; }
  .addons hr { width: 30px; height: 1px; margin: 24px 0 0; border: 0; background: #dfe1e5; }
  .plus { margin-top: 56px; }
  .collapse { margin-top: 320px; }
  .cal { font: 500 11.500px Roboto, sans-serif; fill: #4285f4; }
  .ppt { font: 700 16px 'Open Sans', sans-serif; fill: #fff; }

  .edgebar { flex: 1; padding: 3px 0; display: flex; flex-direction: column; align-items: center; }
  .etool { height: 60px; display: flex; align-items: center; }
  .etool.add { margin-top: 5px; padding-right: 2px; }
  .ebottom { margin-top: auto; width: 42px; padding-top: 3px; border-top: 1px solid #bcbcbc; display: flex; flex-direction: column; align-items: center; }

  .taskbar { height: 72px; flex: none; display: flex; align-items: center; padding: 0 29px 2px 383px; border-top: 2px solid rgba(120, 120, 130, 0.5); font-family: 'Open Sans', 'Noto Sans', sans-serif; font-size: 18px; color: #222;
    background: linear-gradient(90deg, #e6dcd6 0, #f0dad6 140px, #e9dcd6 230px, #d8dcda 330px, #dcdada 385px, #ecd8d5 480px, #f0dbd3 590px, #d8dcdc 660px, #d3e1e1 770px, #d6dde0 880px, #d5e2e2 970px, #eed9d9 1130px, #ebd9d9 1400px, #edd9da 1560px, #dddbe3 1700px, #d2dde6 1920px); }
  .start { width: 66px; display: flex; justify-content: center; }
  .wsearch { width: 328px; height: 47px; margin: 0 5px 0 6px; border: 1px solid #c9c3c3; border-bottom: 2px solid #b4b0b0; border-radius: 24px; background: rgba(255, 255, 255, 0.72); display: flex; align-items: center; padding: 0 6px 0 15px; font-size: 19px; color: #5c5c5c; }
  .wsearch span { flex: 1; padding-left: 15px; }
  .app { width: 66px; height: 58px; display: flex; justify-content: center; align-items: center; position: relative; }
  .app.active::before { content: ''; position: absolute; left: 5px; top: 0; width: 50px; height: 57px; border-radius: 6px; background: rgba(255, 255, 255, 0.550); box-shadow: 0 0 0 1px rgba(0, 0, 0, 0.060), 6px 0 0 -1px rgba(255, 255, 255, 0.400); }
  .app svg { position: relative; }
  .mark { position: absolute; left: 29px; bottom: 0; width: 9px; height: 5px; border-radius: 3px; background: #837d7d; }
  .active .mark { left: 21px; width: 24px; background: #e3008c; }
  .tray { margin-left: auto; display: flex; align-items: center; }
  .t-cloud { margin-left: 26px; }
  .lang { margin-left: 26px; width: 36px; display: flex; flex-direction: column; align-items: center; line-height: 23px; }
  .t-wifi { margin-left: 26px; }
  .t-vol { margin-left: 10px; }
  .t-bat { margin-left: 10px; overflow: visible; }
  .clockbox { width: 94px; margin-left: 24px; display: flex; flex-direction: column; align-items: flex-end; line-height: 24px; }
  .t-bell { margin-left: 11px; }
</style>
